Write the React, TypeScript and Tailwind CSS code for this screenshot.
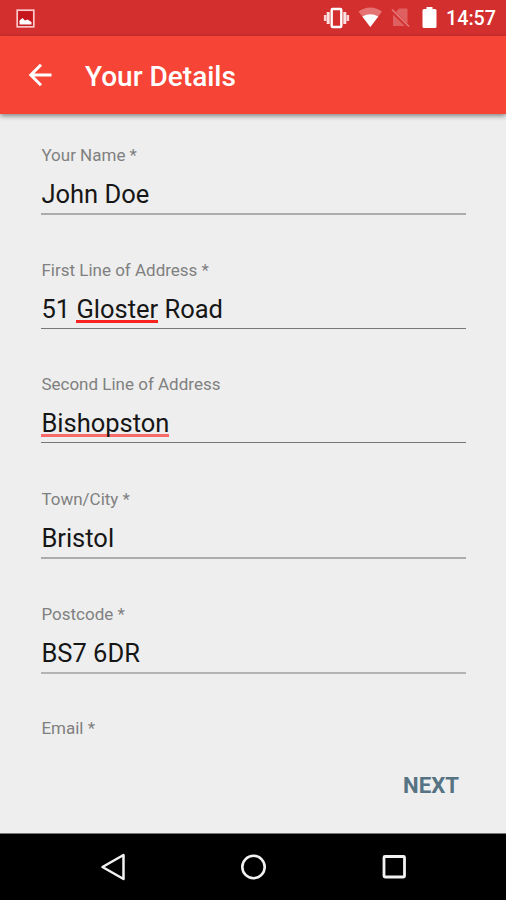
import React from 'react';

interface FieldProps {
    label: string;
    line?: string;
    children?: React.ReactNode;
}

const Field = ({ label, line = 'h-[2px] bg-[#acacac]', children }: FieldProps) => (
    <div className="h-[114.6px] shrink-0">
        <div className="h-5 text-[17px] leading-5 text-[#808080]">{label}</div>
        <div className="mt-3.5 h-[33.9px] whitespace-pre text-[25.5px] leading-[30px] text-[#161616]">{children}</div>
        <div className={line} />
    </div>
);

const StatusBar = () => (
    <div className="flex h-9 items-center bg-[#d32f2f] pr-[10px] pl-4 text-white">
        <svg width="19" height="19" viewBox="0 0 19 19">
            <rect x="1.2" y="1.2" width="16.6" height="16.6" fill="#c4161c" stroke="#fbc9c9" strokeWidth="1.7" />
            <path d="M3.5 15.5v-4l3-2.5 2.5 2.5 2.5-1 4 2.500v2.500z" fill="#fff" />
        </svg>
        <svg className="ml-auto" width="27" height="22" viewBox="0 0 27 22">
            <rect x="8.7" y="2" width="9.6" height="18" rx="1" fill="none" stroke="#fff" strokeWidth="2.4" />
            <path d="M5.2 5v12M21.8 5v12" stroke="#fbe3e3" strokeWidth="3" />
            <path d="M2.2 8v6M24.800 8v6" stroke="#fbd5d5" strokeWidth="2.600" />
        </svg>
        <svg className="ml-2" width="24" height="22" viewBox="0 0 24 22">
            <path d="M.5 4.500Q12.300-3.500 24 4.500L12.300 20z" fill="#e57373" />
            <path d="M4.300 9.500Q12.300 5 20.300 9.500L12.300 20z" fill="#fff" />
        </svg>
        <svg className="ml-[9px]" width="20" height="22" viewBox="0 0 20 22">
            <path d="M8 1.500h8.500v15L5 5z M2 7.500L14 19H2z" fill="#df6060" />
            <path d="M1 2.500l17 17" stroke="#e57878" strokeWidth="1.700" />
        </svg>
        <svg className="ml-[11px]" width="15" height="22" viewBox="0 0 15 22">
            <path d="M4.500 0h6v2H13q1.500 0 1.500 1.500v16Q14.500 21 13 21H2Q.5 21 .5 19.500v-16Q.5 2 2 2h2.500z" fill="#fff" />
        </svg>
        <span className="ml-[9px] w-[50px] pt-0.5 whitespace-nowrap text-[19.700px] leading-6 font-medium">14:57</span>
    </div>
);

const NavigationBar = () => (
    <div className="flex h-[67px] items-center justify-between border-t border-[#777777] bg-black pr-[98px] pl-[100px]">
        <svg width="26" height="28" viewBox="0 0 26 28">
            <path d="M23.500 2v24L2.500 14z" fill="none" stroke="#f2f2f2" strokeWidth="2.500" strokeLinejoin="round" />
        </svg>
        <svg width="28" height="28" viewBox="0 0 28 28">
            <circle cx="14.500" cy="14" r="11.200" fill="none" stroke="#f2f2f2" strokeWidth="2.600" />
        </svg>
        <svg width="28" height="28" viewBox="0 0 28 28">
            <rect x="4" y="3.500" width="20.500" height="20.500" rx="1" fill="none" stroke="#f2f2f2" strokeWidth="2.800" />
        </svg>
    </div>
);

const App = () => {
    return (
        <div className="flex h-[900px] w-[506px] flex-col overflow-hidden bg-[#eeeeee] font-['Roboto','Liberation_Sans',sans-serif]">
            <StatusBar />
            <header className="flex h-[78px] shrink-0 items-center bg-[#f64436] pl-7 text-white shadow-[0_2px_5px_rgba(0,0,0,0.45)]">
                <svg width="24" height="24" viewBox="0 0 24 24">
                    <path d="M23.500 12H2.500M13 1.800L2.800 12 13 22.200" fill="none" stroke="#fff" strokeWidth="3" />
                </svg>
                <h1 className="ml-[33px] pt-[3px] text-[28px] leading-8 font-medium">Your Details</h1>
            </header>

            <main className="flex min-h-0 flex-1 flex-col pt-[31.3px] pr-10 pl-[41.4px]">
                <Field label="Your Name *">John Doe</Field>
                <Field label="First Line of Address *" line="h-px bg-[#777777]">
                    51 <span className="inline-block h-[29px] border-b-[3px] border-[#f8221f]">Gloster</span> Road
                </Field>
                <Field label="Second Line of Address" line="h-px bg-[#777777]">
                    <span className="inline-block h-[29px] border-b-[3px] border-[#f96b69]">Bishopston</span>
                </Field>
                <Field label="Town/City *">Bristol</Field>
                <Field label="Postcode *" line="h-[2px] bg-[#b4b4b4]">BS7 6DR</Field>
                <div className="h-5 text-[17px] leading-5 text-[#808080]">Email *</div>
                <button className="mt-[33px] mr-[7px] self-end text-[22.2px] leading-7 font-bold text-[#557382]">NEXT</button>
            </main>

            <NavigationBar />
        </div>
    );
};

export default App;
